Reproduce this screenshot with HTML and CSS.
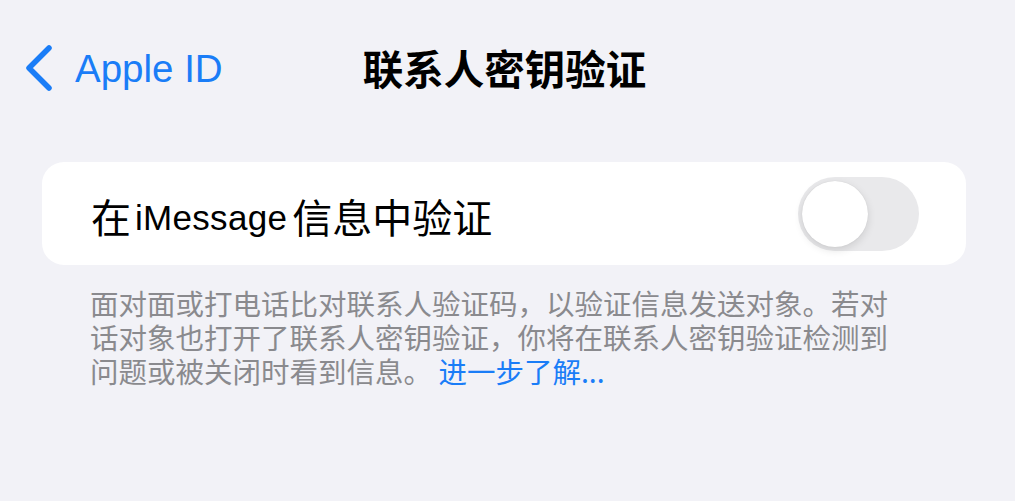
FILE: index.html
```html
<!DOCTYPE html>
<html lang="zh-CN">
<head>
<meta charset="utf-8">
<title>联系人密钥验证</title>
<link rel="stylesheet" href="styles.css">
</head>
<body>
<div class="screen">
  <header class="navbar">
    <a class="back" href="#">
      <svg class="chevron" width="30" height="48" viewBox="0 0 30 48" aria-hidden="true">
        <polyline points="25,4 5,24 25,44" fill="none" stroke="#1a7df7" stroke-width="5.5" stroke-linecap="round" stroke-linejoin="round"/>
      </svg>
      <span class="back-label">Apple ID</span>
    </a>
    <h1 class="title">联系人密钥验证</h1>
    <div class="spacer"></div>
  </header>

  <section class="card">
    <span class="row-label"><span class="cjk">在</span><span class="latin">iMessage</span><span class="cjk">信息中验证</span></span>
    <span class="switch" role="switch" aria-checked="false"><span class="knob"></span></span>
  </section>

  <p class="footnote">面对面或打电话比对联系人验证码，以验证信息发送对象。若对话对象也打开了联系人密钥验证，你将在联系人密钥验证检测到问题或被关闭时看到信息。 <a class="link" href="#">进一步了解...</a></p>
</div>
</body>
</html>
```

FILE: styles.css
```css
html, body {
  margin: 0;
  padding: 0;
  background: #f2f2f7;
}

.screen {
  width: 1015px;
  height: 501px;
  overflow: hidden;
  font-family: "Liberation Sans", "Noto Sans CJK SC", sans-serif;
  color: #000;
}

.navbar {
  height: 136px;
  display: grid;
  grid-template-columns: 1fr auto 1fr;
  align-items: center;
}

.back {
  display: flex;
  align-items: center;
  gap: 21px;
  padding-left: 24px;
  text-decoration: none;
  color: #1a7df7;
}

.chevron {
  display: block;
}

.back-label {
  font-size: 38.5px;
  line-height: 1;
  position: relative;
  top: 1px;
}

.title {
  margin: 0;
  font-family: "Noto Sans CJK SC", sans-serif;
  font-size: 40.5px;
  font-weight: 700;
  line-height: 1;
  padding-right: 6px;
}

.card {
  margin: 26px 49px 0 42px;
  height: 103px;
  background: #ffffff;
  border-radius: 22px;
  display: flex;
  align-items: center;
  justify-content: space-between;
  padding: 0 47px 0 49px;
}

.row-label {
  display: flex;
  align-items: baseline;
  margin-top: 6px;
  color: #000;
  white-space: nowrap;
}

.row-label .cjk {
  font-family: "Noto Sans CJK SC", sans-serif;
  font-size: 40px;
  line-height: 1;
}

.row-label .latin {
  font-family: "Liberation Sans", sans-serif;
  font-size: 35px;
  letter-spacing: 0.3px;
  line-height: 1;
  margin: 0 5px 0 4px;
  position: relative;
  top: -3px;
}

.switch {
  width: 121px;
  height: 74px;
  border-radius: 37px;
  background: #e9e9eb;
  display: flex;
  align-items: center;
  padding-left: 4px;
  box-sizing: border-box;
}

.knob {
  width: 66px;
  height: 66px;
  border-radius: 50%;
  background: #ffffff;
  box-shadow: 0 3px 8px rgba(0, 0, 0, 0.12), 0 0 1px rgba(0, 0, 0, 0.12);
}

.footnote {
  margin: 21px 0 0 90px;
  width: 815px;
  font-family: "Noto Sans CJK SC", sans-serif;
  font-size: 28.5px;
  line-height: 34px;
  color: #8a8a8e;
}

.link {
  color: #1a7df7;
  text-decoration: none;
}
```
